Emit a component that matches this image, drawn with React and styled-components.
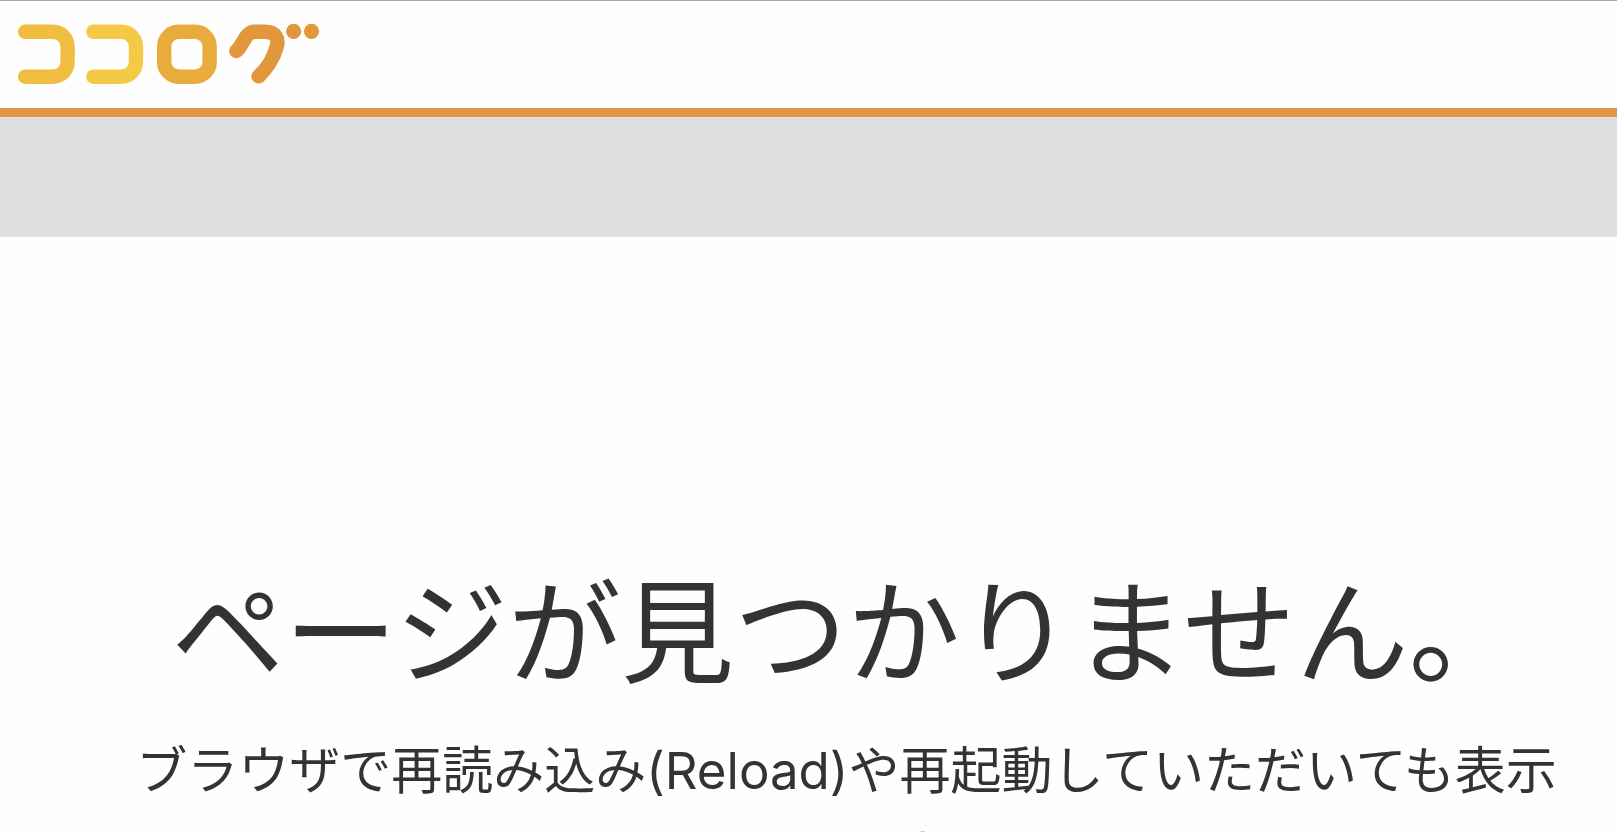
import React from 'react';
import styled, { createGlobalStyle } from 'styled-components';

const GlobalStyle = createGlobalStyle`
  body {
    margin: 0;
    background: #fefefe;
    color: #333;
    font-family: Inter, "Noto Sans CJK JP", sans-serif;
    overflow: hidden;
  }
`;

const Header = styled.header`
  display: flex;
  align-items: flex-start;
  height: 107px;
  border-top: 1px solid #a9a9a9;
  border-bottom: 9px solid #e19748;
`;

const LogoLink = styled.a`
  display: block;
  padding: 19px 16px;
`;

const LogoImage = styled.svg`
  display: block;
`;

const Band = styled.div`
  height: 120px;
  background: #e0e0e0;
`;

const Main = styled.main`
  padding: 316px 40px 0 116px;
  text-align: center;
`;

const Title = styled.h1`
  margin: 0;
  font-size: 113px;
  font-weight: 400;
  line-height: 160px;
`;

const Message = styled.p`
  margin: 15px 0 0;
  font-size: 51px;
  line-height: 86px;
`;

function Logo() {
  return (
    <LogoImage width="306" height="68" viewBox="16 20 306 68" role="img" aria-label="ココログ">
      <g fill="none" strokeWidth="14.4" strokeLinecap="round" strokeLinejoin="round">
        <path stroke="#f0bd41" d="M25.2 31.8H52.5C61.5 31.8 67.6 38.5 67.6 47V61.5C67.6 70 61.5 76.7 52.5 76.7H25.2" />
        <path stroke="#f3c945" d="M93.4 31.8H120.9C129.9 31.8 136 38.5 136 47V61.5C136 70 129.9 76.7 120.9 76.7H93.4" />
        <rect stroke="#e9ac3c" x="164.2" y="31.8" width="45.4" height="44.9" rx="14.5" />
        <path stroke="#e3973c" d="M236.3 51C244 44 245 31.8 255 31.8H265C275.5 31.8 279 38.5 276.8 46.5C273.5 58.5 266 70 258.5 76.4" />
      </g>
      <circle cx="293.6" cy="31.3" r="7.6" fill="#e3973c" />
      <circle cx="311.5" cy="31.3" r="7.6" fill="#e3973c" />
    </LogoImage>
  );
}

export default function App() {
  return (
    <>
      <GlobalStyle />
      <Header>
        <LogoLink href="/">
          <Logo />
        </LogoLink>
      </Header>
      <Band />
      <Main>
        <Title>ページが見つかりません。</Title>
        <Message>ブラウザで再読み込み(Reload)や再起動していただいても表示されない場合は、</Message>
      </Main>
    </>
  );
}
